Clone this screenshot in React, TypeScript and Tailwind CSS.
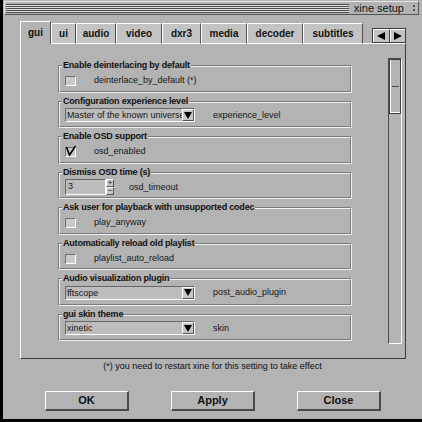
import React from "react";

const BG = "bg-[#b3b3b3]";

function Frame({ title, children }: { title: string; children: React.ReactNode }) {
  return (
    <div className="h-[27.5px] border border-t-[#7a7a7a] border-l-[#7a7a7a] border-b-[#f2f2f2] border-r-[#f2f2f2]">
      <div className="flex h-full flex-col border border-t-[#f2f2f2] border-l-[#f2f2f2] border-b-[#7a7a7a] border-r-[#7a7a7a]">
        <div className={`-mt-[7px] ml-[2px] h-[11px] self-start ${BG} px-[1px] text-[9px] font-bold leading-[11px] tracking-[-0.2px] text-[#111]`}>
          {title}
        </div>
        <div className="flex h-[17px] items-center pl-[5px] text-[9px] leading-[11px] text-[#151515]">{children}</div>
      </div>
    </div>
  );
}

function Check({ checked, label }: { checked?: boolean; label: string }) {
  return (
    <>
      <div className="mt-[3px] h-[10px] w-[11px] border border-t-[#6e6e6e] border-l-[#6e6e6e] border-b-white border-r-white bg-[#c9c9c9]">
        {checked && (
          <svg width="11" height="10" viewBox="0 0 11 10" className="-mt-[2px] -ml-[1px] overflow-visible">
            <polyline points="1.5,1 4.5,9 10.5,0" fill="none" stroke="#000" strokeWidth="1.6" />
          </svg>
        )}
      </div>
      <span className="ml-[18px] mt-[2px]">{label}</span>
    </>
  );
}

function Select({ value, label }: { value: string; label: string }) {
  return (
    <>
      <div className="flex h-[14px] w-[130px] border border-t-[#666] border-l-[#666] border-b-white border-r-white bg-[#bdbdbd]">
        <div className="flex-1 overflow-hidden whitespace-nowrap pl-[1px] text-[9px] leading-[12px]">{value}</div>
        <div className="flex h-full w-[12px] items-center justify-center border border-t-white border-l-white border-b-[#555] border-r-[#555] bg-[#c6c6c6]">
          <svg width="8" height="7" viewBox="0 0 8 7">
            <polygon points="0,0 8,0 4,7" fill="#000" />
          </svg>
        </div>
      </div>
      <span className="ml-[18px]">{label}</span>
    </>
  );
}

const tabs = [
  { name: "gui", w: "w-[31px]" },
  { name: "ui", w: "w-[25px]" },
  { name: "audio", w: "w-[40px]" },
  { name: "video", w: "w-[46px]" },
  { name: "dxr3", w: "w-[39px]" },
  { name: "media", w: "w-[46px]" },
  { name: "decoder", w: "w-[56px]" },
  { name: "subtitles", w: "w-[60px]" },
];

export default function App() {
  return (
    <div className={`flex h-[422px] w-[422px] flex-col overflow-hidden border-l-[3px] border-b-[3px] border-black ${BG} font-['Liberation_Sans',Arial,sans-serif] text-[#111]`}>
      {/* title bar */}
      <div className="ml-[1px] mt-[1px] flex h-[14px] w-[415px] items-center border border-t-[#e6e6e6] border-l-[#e6e6e6] border-b-[#555] border-r-[#555]">
        <div className="ml-[1px] h-[9px] flex-1 bg-[repeating-linear-gradient(to_bottom,#4e4e4e_0px,#4e4e4e_1px,#dcdcdc_1px,#dcdcdc_2px)]" />
        <span className="ml-[5px] text-[11px] leading-[12px]">xine setup</span>
        <div className="ml-[9px] mr-[3px] flex flex-col gap-[2px]">
          <div className="h-[2px] w-[2px] bg-[#555]" />
          <div className="h-[2px] w-[2px] bg-[#555]" />
        </div>
      </div>

      {/* tabs */}
      <div className="relative z-10 -mb-[1px] ml-[17px] mt-[6px] flex h-[23px] items-end">
        {tabs.map((t, i) => (
          <div
            key={t.name}
            className={`flex ${t.w} items-center justify-center border-l border-t border-r border-l-white border-t-white border-r-[#505050] text-[10px] font-bold ${
              i === 0 ? `h-[23px] ${BG} pb-[1px]` : "h-[21px] border-b border-b-white bg-[#c3c3c3]"
            }`}
          >
            {t.name}
          </div>
        ))}
        <div className="mb-[1px] ml-[9px] flex h-[15px] w-[34px] border border-[#3c3c3c] bg-[#c3c3c3]">
          <div className="flex flex-1 items-center justify-center border-r border-r-[#3c3c3c] border-t border-l border-t-white border-l-white">
            <svg width="8" height="8" viewBox="0 0 8 8">
              <polygon points="8,0 8,8 0,4" fill="#000" />
            </svg>
          </div>
          <div className="flex flex-1 items-center justify-center border-t border-l border-t-white border-l-white">
            <svg width="8" height="8" viewBox="0 0 8 8">
              <polygon points="0,0 0,8 8,4" fill="#000" />
            </svg>
          </div>
        </div>
      </div>

      {/* panel */}
      <div className="ml-[17px] flex h-[316px] w-[386px] border border-t-white border-l-white border-b-[#3a3a3a] border-r-[#3a3a3a] pl-[37px]">
        <div className="flex w-[294px] flex-col gap-[8px] pt-[21px]">
          <Frame title="Enable deinterlacing by default">
            <Check label="deinterlace_by_default (*)" />
          </Frame>
          <Frame title="Configuration experience level">
            <Select value="Master of the known universe" label="experience_level" />
          </Frame>
          <Frame title="Enable OSD support">
            <Check checked label="osd_enabled" />
          </Frame>
          <Frame title="Dismiss OSD time (s)">
            <div className="mt-[2px] flex h-[16px]">
              <div className="w-[41px] border border-t-[#666] border-l-[#666] border-b-white border-r-white bg-[#bdbdbd] pl-[2px] text-[9px] leading-[13px]">
                3
              </div>
              <div className="flex w-[8px] flex-col">
                <div className="flex h-[8px] items-center justify-center border border-t-white border-l-white border-b-[#555] border-r-[#555] bg-[#c6c6c6] text-[8px] leading-[6px]">+</div>
                <div className="flex h-[8px] items-center justify-center border border-t-white border-l-white border-b-[#555] border-r-[#555] bg-[#c6c6c6] text-[8px] leading-[6px]">−</div>
              </div>
            </div>
            <span className="ml-[15px] mt-[2px]">osd_timeout</span>
          </Frame>
          <Frame title="Ask user for playback with unsupported codec">
            <Check label="play_anyway" />
          </Frame>
          <Frame title="Automatically reload old playlist">
            <Check label="playlist_auto_reload" />
          </Frame>
          <Frame title="Audio visualization plugin">
            <Select value="fftscope" label="post_audio_plugin" />
          </Frame>
          <Frame title="gui skin theme">
            <Select value="xinetic" label="skin" />
          </Frame>
        </div>

        {/* scrollbar */}
        <div className="ml-[36px] mt-[14px] flex h-[286px] w-[14px] flex-col border border-t-[#4a4a4a] border-l-[#4a4a4a] border-b-white border-r-white">
          <div className="h-[55px] border border-[#3e3e3e]">
            <div className="flex h-full items-center justify-center border-l border-b border-l-white border-b-white">
              <div className="h-[1px] w-[7px] bg-[#4a4a4a]" />
            </div>
          </div>
        </div>
      </div>

      <div className="mt-[1px] text-center text-[9px] leading-[12px]">(*) you need to restart xine for this setting to take effect</div>

      <div className="ml-[42px] mt-[19px] flex gap-[42px]">
        {["OK", "Apply", "Close"].map((b) => (
          <div
            key={b}
            className="flex h-[20px] w-[84px] items-center justify-center border-t border-l border-r-2 border-b-2 border-t-white border-l-white border-r-[#4a4a4a] border-b-[#4a4a4a] text-[11px] font-bold"
          >
            {b}
          </div>
        ))}
      </div>
    </div>
  );
}
